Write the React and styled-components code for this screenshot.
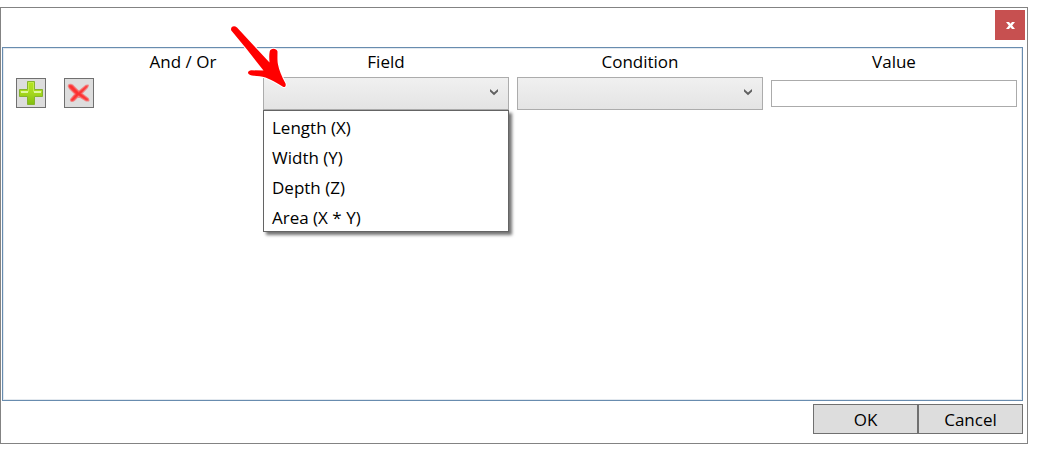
import React from 'react';
import styled, { createGlobalStyle } from 'styled-components';

const GlobalStyle = createGlobalStyle`
  *, *::before, *::after { box-sizing: border-box; }
  body {
    margin: 0;
    background: #fff;
    color: #000;
    font: 17px/26px "Segoe UI", "Open Sans", sans-serif;
  }
  button, input, select { font: inherit; color: inherit; border-radius: 0; }
`;

const Dialog = styled.section`
  position: relative;
  display: flex;
  flex-direction: column;
  margin: 7px 10px 11px 0;
  padding: 2px 2px 9px 1px;
  border: 1px solid #838383;
  background: #fff;
`;

const TitleBar = styled.header`
  display: flex;
  justify-content: flex-end;
  padding-bottom: 7px;
`;

const CloseButton = styled.button`
  display: grid;
  place-items: center;
  width: 30px;
  height: 30px;
  padding: 0;
  border: 0;
  background: #c75050;
`;

const Panel = styled.main`
  min-height: 354px;
  margin-right: 2px;
  padding-right: 1px;
  border: 1px solid #688caf;
  box-shadow: inset 0 0 0 1px #e3e9ef;
`;

const FilterGrid = styled.div`
  display: grid;
  grid-template-columns: 104px 152px repeat(3, minmax(0, 1fr));
  grid-template-rows: 29px 33px;
`;

const ColumnLabel = styled.label`
  padding-top: 1px;
  text-align: center;
`;

const RowActions = styled.div`
  display: flex;
  align-items: flex-start;
  gap: 18px;
  padding: 1px 0 0 13px;
`;

const IconButton = styled.button`
  display: grid;
  place-items: center;
  width: 30px;
  height: 30px;
  padding: 0;
  border: 1px solid #707070;
  background: #ddd;
`;

const Cell = styled.div`
  position: relative;
  align-self: center;
  margin: 0 4px;
`;

const Combo = styled.select`
  display: block;
  appearance: none;
  width: 100%;
  height: 33px;
  padding: 0 32px 0 8px;
  border: 1px solid #acacac;
  background: linear-gradient(#f0f0f0, #e4e4e4);
  outline: 0;
`;

const ComboArrow = styled.svg`
  position: absolute;
  top: 11px;
  right: 10px;
  pointer-events: none;
`;

const Options = styled.ul`
  position: absolute;
  top: 100%;
  left: 0;
  right: 0;
  display: flex;
  flex-direction: column;
  gap: 4px;
  margin: 0;
  padding: 4px 0 0;
  border: 1px solid #646464;
  background: #fff;
  box-shadow: 3px 3px 3px rgba(0, 0, 0, 0.55);
  list-style: none;
`;

const Option = styled.li`
  padding: 0 8px;
`;

const ValueInput = styled.input`
  display: block;
  width: 100%;
  height: 27px;
  padding: 0 4px;
  border: 1px solid #ababab;
  background: #fff;
  outline: 0;
`;

const Footer = styled.footer`
  display: flex;
  justify-content: flex-end;
  padding: 3px 2px 0 0;
`;

const ActionButton = styled.button`
  width: 105px;
  height: 30px;
  padding: 2px 0 0;
  border: 1px solid #707070;
  background: #ddd;
`;

const Pointer = styled.svg`
  position: absolute;
  top: 12px;
  left: 224px;
  pointer-events: none;
`;

const fields = ['Length (X)', 'Width (Y)', 'Depth (Z)', 'Area (X * Y)'];

function Chevron() {
  return (
    <ComboArrow width="10" height="9" viewBox="0 0 10 9" aria-hidden="true">
      <path d="M1 1v2.600L5 7.200l4-3.600V1L5 4.600z" fill="#606060" />
    </ComboArrow>
  );
}

function PlusIcon() {
  return (
    <svg width="26" height="26" viewBox="0 0 26 26" aria-hidden="true">
      <defs>
        <linearGradient id="plusFill" x1="0" y1="0" x2="0" y2="1">
          <stop offset="0" stopColor="#b5e61d" />
          <stop offset="0.5" stopColor="#a5d81f" />
          <stop offset="1" stopColor="#82bf10" />
        </linearGradient>
      </defs>
      <path d="M9.500 1.500h7v8h8v7h-8v8h-7v-8h-8v-7h8z" fill="url(#plusFill)" stroke="#86b32d" />
      <path d="M2.500 11.500h8v-9h5v9h8" fill="none" stroke="#c3ec4c" />
      <path d="M3 12h7M16 12h7" stroke="#e0f8a0" strokeWidth="2" />
    </svg>
  );
}

function DeleteIcon() {
  return (
    <svg width="26" height="26" viewBox="0 0 26 26" aria-hidden="true">
      <path
        d="M2.800 5.500C3.500 4 6.500 4.500 8 7l4.800 4.800 7.200-6 2-.4-.8 1.800-5.900 6.300 6.700 5.300.5 1.800-2.500-.2-7.500-4.600-4.500 4.500c-1.700 1.300-3.700.7-3-1L9.500 14 4.500 9C3.500 8 2.300 6.600 2.800 5.500z"
        fill="#fb3030"
        stroke="#fb5050"
        strokeOpacity="0.6"
        strokeWidth="2"
        strokeLinejoin="round"
      />
    </svg>
  );
}

function App() {
  return (
    <>
      <GlobalStyle />
      <Dialog role="dialog" aria-label="Filter">
        <TitleBar>
          <CloseButton type="button" aria-label="Close">
            <svg width="11" height="9" viewBox="0 0 11 9" aria-hidden="true">
              <path d="M1 1h3l1.500 1.800L7 1h3L7.200 4.500 10 8H7L5.500 6.200 4 8H1l2.800-3.500z" fill="#fff" />
            </svg>
          </CloseButton>
        </TitleBar>
        <Panel>
          <FilterGrid>
            <span />
            <ColumnLabel as="span">And / Or</ColumnLabel>
            <ColumnLabel htmlFor="field">Field</ColumnLabel>
            <ColumnLabel htmlFor="condition">Condition</ColumnLabel>
            <ColumnLabel htmlFor="value">Value</ColumnLabel>
            <RowActions>
              <IconButton type="button" aria-label="Add condition"><PlusIcon /></IconButton>
              <IconButton type="button" aria-label="Remove condition"><DeleteIcon /></IconButton>
            </RowActions>
            <span />
            <Cell>
              <Combo id="field" defaultValue="">
                <option value="" />
                {fields.map((name) => <option key={name}>{name}</option>)}
              </Combo>
              <Chevron />
              <Options role="listbox" aria-label="Field">
                {fields.map((name) => (
                  <Option key={name} role="option" aria-selected="false">{name}</Option>
                ))}
              </Options>
            </Cell>
            <Cell>
              <Combo id="condition" defaultValue="">
                <option value="" />
              </Combo>
              <Chevron />
            </Cell>
            <Cell>
              <ValueInput id="value" type="text" />
            </Cell>
          </FilterGrid>
        </Panel>
        <Footer>
          <ActionButton type="button">OK</ActionButton>
          <ActionButton type="button">Cancel</ActionButton>
        </Footer>
        <Pointer width="66" height="72" viewBox="225 20 66 72" aria-hidden="true">
          <path
            d="M231.300 30.500C230 27.500 233.500 24.500 237 27.500L255.500 47.500L269.500 62.500C269.200 58.500 269 55 269.700 51.500C270.500 47.800 276.500 47.800 277.500 51.500C277.500 57 277.200 60 278 64.500C279 70 281.500 76 285.500 83.500C286.300 86 285 87.500 283 86.700C276 82.500 271 79.500 265.500 77.500C261 76 256.500 76 252 75.500C246.500 74.500 247 70.800 251.500 70.300L263.500 70.600L247 49.500Z"
            fill="#f00"
            stroke="#fff"
            strokeWidth="2"
            strokeLinejoin="round"
            paintOrder="stroke"
          />
        </Pointer>
      </Dialog>
    </>
  );
}

export default App;
